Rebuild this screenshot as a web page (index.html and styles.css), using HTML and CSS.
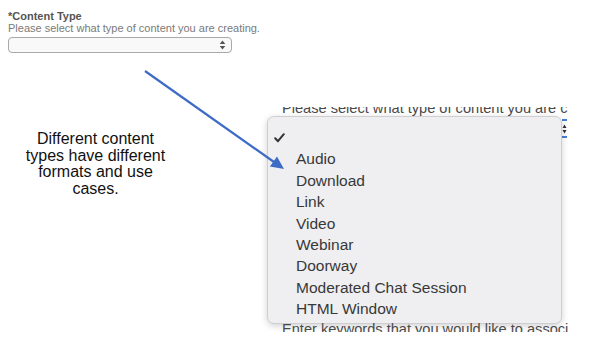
FILE: index.html
```html
<!DOCTYPE html>
<html lang="en">
<head>
  <meta charset="UTF-8">
  <title>Content Type</title>
  <link rel="stylesheet" href="styles.css">
</head>
<body>
  <!-- Form field -->
  <section class="field">
    <div class="field-label">*Content Type</div>
    <div class="field-help">Please select what type of content you are creating.</div>
    <div class="fake-select">
      <svg class="updown" width="7" height="10" viewBox="0 0 7 10"><path d="M3.5 0.5 L6.3 4 H0.7 Z M3.5 9.5 L6.3 6 H0.7 Z" fill="#555"/></svg>
    </div>
  </section>

  <!-- Slide annotation -->
  <p class="caption">Different content<br>types have different<br>formats and use<br>cases.</p>

  <!-- Screenshot of open dropdown -->
  <div class="shot">
    <div class="shot-text top">Please select what type of content you are c</div>
    <div class="shot-focus">
      <svg width="5" height="12" viewBox="0 0 5 12"><path d="M2.5 1.5 L4.5 5 H0.5 Z M2.5 10.5 L4.5 7 H0.5 Z" fill="#333"/></svg>
    </div>
    <div class="menu">
      <div class="menu-item checked">
        <svg width="11" height="10" viewBox="0 0 11 10"><path d="M1.2 5.2 L4 8.2 L9.8 1.2" fill="none" stroke="#333" stroke-width="2" stroke-linecap="round" stroke-linejoin="round"/></svg>
      </div>
      <div class="menu-item">Audio</div>
      <div class="menu-item">Download</div>
      <div class="menu-item">Link</div>
      <div class="menu-item">Video</div>
      <div class="menu-item">Webinar</div>
      <div class="menu-item">Doorway</div>
      <div class="menu-item">Moderated Chat Session</div>
      <div class="menu-item">HTML Window</div>
    </div>
    <div class="shot-text bottom">Enter keywords that you would like to associ</div>
  </div>

  <svg class="pointer" width="614" height="362" viewBox="0 0 614 362">
    <line x1="145" y1="71" x2="274" y2="162" stroke="#3d6cc6" stroke-width="2.2"/>
    <polygon points="284,169 277,156.6 269.9,166.6" fill="#3d6cc6"/>
  </svg>
</body>
</html>
```

FILE: styles.css
```css
* {
  margin: 0;
  padding: 0;
  box-sizing: border-box;
}

body {
  position: relative;
  width: 614px;
  height: 362px;
  background: #fff;
  font-family: 'Liberation Sans', Arial, sans-serif;
  overflow: hidden;
}

/* Form field */
.field {
  padding: 11px 0 0 8px;
}

.field-label {
  font-size: 11px;
  font-weight: bold;
  color: #555;
  line-height: 11px;
}

.field-help {
  font-size: 11px;
  color: #7a7a7a;
  line-height: 12px;
}

.fake-select {
  width: 224px;
  height: 16px;
  margin-top: 3px;
  border: 1px solid #a9a9a9;
  border-radius: 4px;
  background: #f9f9f9;
  display: flex;
  justify-content: flex-end;
  align-items: center;
  padding-right: 5px;
}

/* Annotation */
.caption {
  position: absolute;
  left: 5px;
  top: 131px;
  width: 181px;
  font-size: 16px;
  line-height: 16.7px;
  text-align: center;
  color: #111;
}

.pointer {
  position: absolute;
  left: 0;
  top: 0;
}

/* Dropdown screenshot */
.shot {
  position: absolute;
  left: 260px;
  top: 107px;
  width: 308px;
  height: 225px;
  overflow: hidden;
  background: #fff;
}

.shot-text {
  position: absolute;
  left: 22px;
  font-size: 14.6px;
  line-height: 16px;
  color: #4a4a4a;
  white-space: nowrap;
}

.shot-text.top {
  top: -7px;
}

.shot-text.bottom {
  top: 214px;
}

.shot-focus {
  position: absolute;
  right: 1px;
  top: 12px;
  width: 5px;
  height: 19px;
  border-top: 2px solid #4a7fd6;
  border-bottom: 2px solid #4a7fd6;
  display: flex;
  align-items: center;
  justify-content: center;
}

.menu {
  position: absolute;
  left: 7px;
  top: 9px;
  width: 295px;
  padding: 10px 0 3px;
  background: #efeff1;
  border: 1px solid #cfcfd2;
  border-radius: 7px;
  box-shadow: 0 2px 7px rgba(0, 0, 0, 0.18);
}

.menu-item {
  height: 21.4px;
  line-height: 21.4px;
  padding-left: 28px;
  font-size: 15.5px;
  color: #383838;
  white-space: nowrap;
}

.menu-item.checked {
  padding-left: 6px;
  display: flex;
  align-items: center;
}
```
